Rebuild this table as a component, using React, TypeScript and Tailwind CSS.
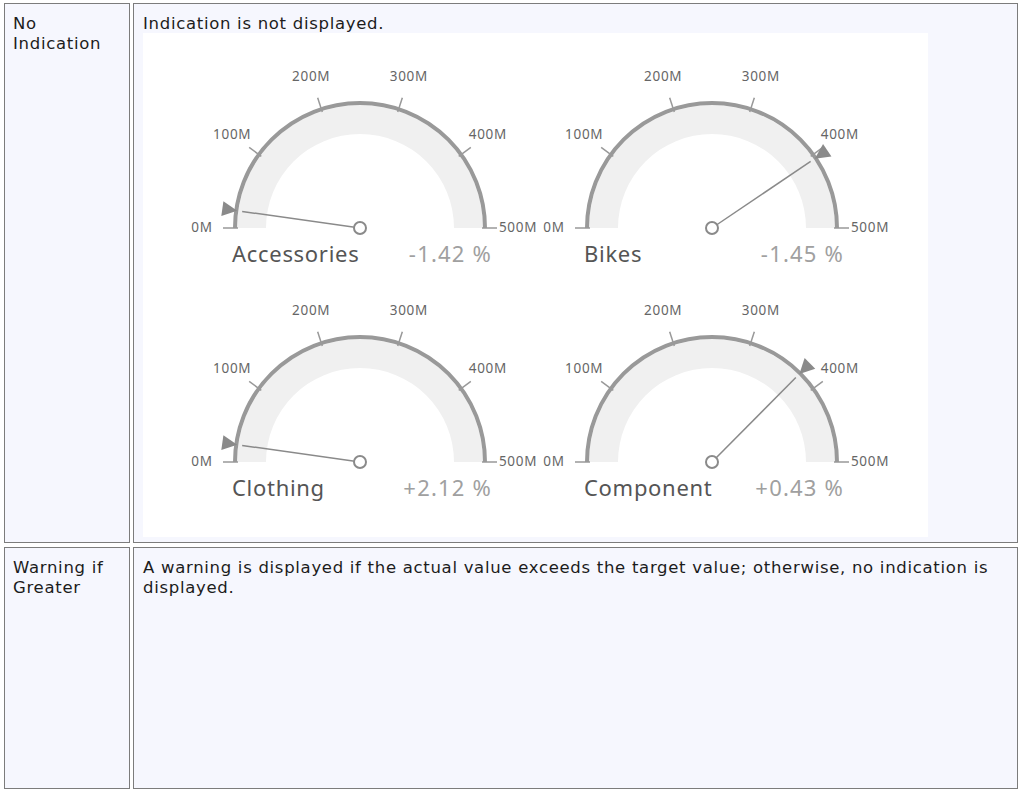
type GaugeProps = {
  title: string;
  delta: string;
  angle: number; // degrees from the left end, over the top
};

const CX = 176;
const CY = 168;
const TICKS = ['0M', '100M', '200M', '300M', '400M', '500M'];

function pt(r: number, deg: number) {
  const a = (deg * Math.PI) / 180;
  return [CX - r * Math.cos(a), CY - r * Math.sin(a)];
}

function Gauge({ title, delta, angle }: GaugeProps) {
  const [nx, ny] = pt(119, angle);
  const [tx, ty] = pt(124, angle);
  const [bx, by] = pt(139, angle);
  const a = (angle * Math.PI) / 180;
  // perpendicular for the marker base
  const px = -Math.sin(a) * 7.5;
  const py = Math.cos(a) * 7.5;

  return (
    <svg width="352" height="234" viewBox="0 0 352 234">
      <path
        d={`M ${CX - 123} ${CY} A 123 123 0 0 1 ${CX + 123} ${CY} L ${CX + 94} ${CY} A 94 94 0 0 0 ${CX - 94} ${CY} Z`}
        fill="#f0f0f0"
      />
      <path
        d={`M ${CX - 125} ${CY} A 125 125 0 0 1 ${CX + 125} ${CY}`}
        fill="none"
        stroke="#999"
        strokeWidth="4"
      />
      {TICKS.map((label, i) => {
        const deg = i * 36;
        const [x1, y1] = pt(122, deg);
        const [x2, y2] = pt(137, deg);
        const [lx, ly] = pt(158, deg);
        return (
          <g key={label}>
            <line x1={x1} y1={y1} x2={x2} y2={y2} stroke="#999" strokeWidth="1.5" />
            <text
              x={lx}
              y={ly}
              textAnchor="middle"
              dominantBaseline="middle"
              fontSize="13.5"
              fill="#666"
              style={{ fontFamily: '"Noto Sans", sans-serif' }}
            >
              {label}
            </text>
          </g>
        );
      })}
      <polygon
        points={`${tx},${ty} ${bx + px},${by + py} ${bx - px},${by - py}`}
        fill="#8a8a8a"
      />
      <line x1={CX} y1={CY} x2={nx} y2={ny} stroke="#8a8a8a" strokeWidth="1.5" />
      <circle cx={CX} cy={CY} r="6" fill="#fff" stroke="#8a8a8a" strokeWidth="2" />
      <text
        x={CX - 128}
        y={CY + 34}
        fontSize="22"
        fill="#555"
        style={{ fontFamily: '"Noto Sans", sans-serif' }}
      >
        {title}
      </text>
      <text
        x={CX + 132}
        y={CY + 34}
        textAnchor="end"
        fontSize="22"
        letterSpacing="1.2"
        fill="#a0a0a0"
        style={{ fontFamily: '"Noto Sans", sans-serif' }}
      >
        {delta}
      </text>
    </svg>
  );
}

const gauges: GaugeProps[] = [
  { title: 'Accessories', delta: '-1.42 %', angle: 8 },
  { title: 'Bikes', delta: '-1.45 %', angle: 146 },
  { title: 'Clothing', delta: '+2.12 %', angle: 8 },
  { title: 'Component', delta: '+0.43 %', angle: 134.8 },
];

const cell = 'border border-[#7c7c7c] bg-[#f6f7fe]';

export default function App() {
  return (
    <div
      className="w-[1021px] h-[791px] bg-white pl-[4px] pt-[3px] flex flex-col gap-[4px] text-[16.5px] leading-[20px] tracking-[0.7px] text-[#1c1c1c]"
      style={{ fontFamily: '"DejaVu Sans", Verdana, sans-serif' }}
    >
      <div className="flex gap-[3px] h-[540px]">
        <div className={`${cell} w-[126px] px-[8px] pt-[10px]`}>No Indication</div>
        <div className={`${cell} w-[885px] pl-[9px] pt-[10px]`}>
          <p className="h-[19px]">Indication is not displayed.</p>
          <div className="w-[785px] h-[504px] bg-white pl-[41px] pt-[27px] grid grid-cols-[352px_352px] grid-rows-[234px_234px] content-start">
            {gauges.map((g) => (
              <Gauge key={g.title} {...g} />
            ))}
          </div>
        </div>
      </div>
      <div className="flex gap-[3px] h-[242px]">
        <div className={`${cell} w-[126px] px-[8px] pt-[10px]`}>Warning if Greater</div>
        <div className={`${cell} w-[885px] pl-[9px] pr-[8px] pt-[10px]`}>
          A warning is displayed if the actual value exceeds the target value; otherwise, no indication is displayed.
        </div>
      </div>
    </div>
  );
}
